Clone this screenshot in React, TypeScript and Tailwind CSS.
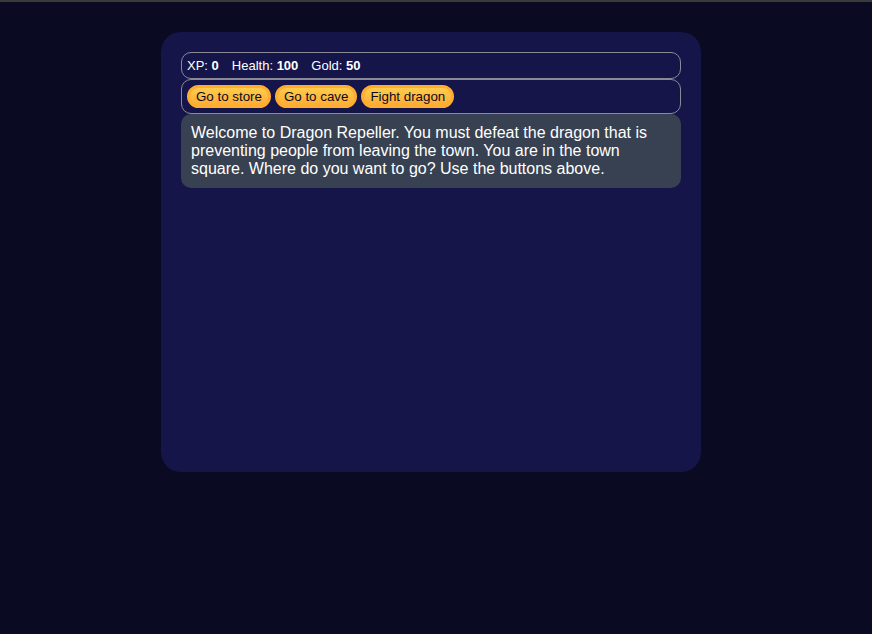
export default function App() {
  const buttons = ['Go to store', 'Go to cave', 'Fight dragon']

  return (
    <div className="min-h-[634px] bg-[#0a0a23] font-['Liberation_Sans',Arial,sans-serif]">
      <div className="h-[2px] bg-[#3a3a3a]" />
      <div className="pr-[10px]">
        <div className="mx-auto mt-[30px] w-[540px] h-[440px] rounded-[20px] bg-[#15154a] p-5">
          {/* Stats */}
          <div className="flex gap-[13px] rounded-[10px] border border-[#8a8a96] px-[5px] py-[5px] text-[13px] leading-[15px] text-white">
            <span>XP: <strong>0</strong></span>
            <span>Health: <strong>100</strong></span>
            <span>Gold: <strong>50</strong></span>
          </div>

          {/* Controls */}
          <div className="flex gap-1 rounded-[10px] border border-[#8a8a96] p-[5px]">
            {buttons.map((b) => (
              <button
                key={b}
                className="h-[23px] rounded-full border-[3px] border-[#feac32] bg-[#feac32] bg-gradient-to-b from-[#fecc4c] to-[#ffac33] px-[6px] text-[13.33px] leading-[15px] text-[#0a0a23]"
              >
                {b}
              </button>
            ))}
          </div>

          {/* Text */}
          <div className="rounded-[10px] bg-[#374151] p-[10px] text-[16px] leading-[18px] text-white">
            Welcome to Dragon Repeller. You must defeat the dragon that is preventing people from leaving the town. You are in the town square. Where do you want to go? Use the buttons above.
          </div>
        </div>
      </div>
    </div>
  )
}
